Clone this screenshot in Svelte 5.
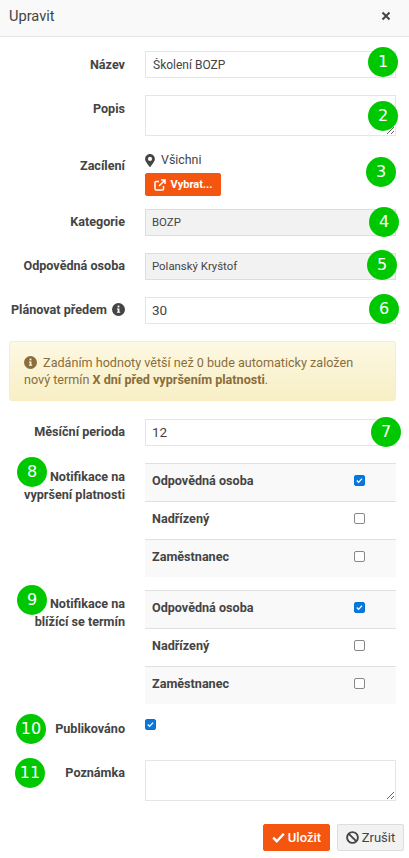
<script>
  // green numbered markers drawn on top of the form
  const markers = [
    { n: 1, x: 383, y: 62 },
    { n: 2, x: 383, y: 116 },
    { n: 3, x: 381, y: 172 },
    { n: 4, x: 384, y: 222 },
    { n: 5, x: 382, y: 265 },
    { n: 6, x: 384, y: 309 },
    { n: 7, x: 386, y: 432 },
    { n: 8, x: 32, y: 472 },
    { n: 9, x: 32, y: 600 },
    { n: 10, x: 31, y: 729 },
    { n: 11, x: 30, y: 773 }
  ];

  const notifications = [
    {
      label: ['Notifikace na', 'vypršení platnosti'],
      rows: [
        { name: 'Odpovědná osoba', checked: true },
        { name: 'Nadřízený', checked: false },
        { name: 'Zaměstnanec', checked: false }
      ]
    },
    {
      label: ['Notifikace na', 'blížící se termín'],
      rows: [
        { name: 'Odpovědná osoba', checked: true },
        { name: 'Nadřízený', checked: false },
        { name: 'Zaměstnanec', checked: false }
      ]
    }
  ];
</script>

<div class="modal">
  <header class="modal-header">
    <h1>Upravit</h1>
    <button class="close" aria-label="Zavřít">
      <svg width="10" height="10" viewBox="0 0 10 10"><path d="M1.5 1.5l7 7M8.5 1.5l-7 7" stroke="#444" stroke-width="2" fill="none" /></svg>
    </button>
  </header>

  <form class="modal-body" on:submit|preventDefault>
    <div class="row first">
      <label class="lbl" for="nazev">Název</label>
      <input id="nazev" class="control" type="text" value="Školení BOZP" />
    </div>

    <div class="row popis">
      <label class="lbl" for="popis">Popis</label>
      <textarea id="popis" class="control"></textarea>
    </div>

    <div class="row zacileni">
      <span class="lbl">Zacílení</span>
      <div class="target">
        <div class="target-value">
          <svg width="10" height="13" viewBox="0 0 384 512"><path fill="#444" d="M172 502C27 291 0 265 0 192 0 86 86 0 192 0s192 86 192 192c0 73-27 99-172 310-9 14-31 14-40 0zm20-230a80 80 0 1 0 0-160 80 80 0 0 0 0 160z" /></svg>
          <span>Všichni</span>
        </div>
        <button type="button" class="btn btn-primary btn-small">
          <svg width="12" height="12" viewBox="0 0 12 12" fill="none" stroke="#fff" stroke-width="1.5"><path d="M9.5 7v3a1 1 0 0 1-1 1H2a1 1 0 0 1-1-1V3.5a1 1 0 0 1 1-1h3" /><path d="M5 7l5.5-5.5M7 1h4v4" /></svg>
          Vybrat...
        </button>
      </div>
    </div>

    <div class="row">
      <label class="lbl" for="kategorie">Kategorie</label>
      <div id="kategorie" class="control select">BOZP</div>
    </div>

    <div class="row">
      <label class="lbl" for="osoba">Odpovědná osoba</label>
      <div id="osoba" class="control select">Polanský Kryštof</div>
    </div>

    <div class="row">
      <label class="lbl" for="predem">
        Plánovat předem
        <svg class="info" width="13" height="13" viewBox="0 0 13 13"><circle cx="6.5" cy="6.5" r="6.5" fill="#444" /><rect x="5.6" y="2.6" width="1.8" height="1.8" fill="#fff" /><path d="M4.9 5.4h2.5v3.4h.8v1H4.9v-1h.8V6.4h-.8z" fill="#fff" /></svg>
      </label>
      <input id="predem" class="control number" type="text" value="30" />
    </div>

    <div class="alert">
      <svg class="info" width="13" height="13" viewBox="0 0 13 13"><circle cx="6.5" cy="6.5" r="6.5" fill="#8a6d3b" /><rect x="5.6" y="2.6" width="1.8" height="1.8" fill="#fcf8e3" /><path d="M4.9 5.4h2.5v3.4h.8v1H4.9v-1h.8V6.4h-.8z" fill="#fcf8e3" /></svg>
      Zadáním hodnoty větší než 0 bude automaticky založen<br />nový termín <b>X dní před vypršením platnosti</b>.
    </div>

    <div class="row">
      <label class="lbl" for="perioda">Měsíční perioda</label>
      <input id="perioda" class="control number" type="text" value="12" />
    </div>

    {#each notifications as group}
      <div class="row notif">
        <span class="lbl">{group.label[0]}<br />{group.label[1]}</span>
        <div class="table">
          {#each group.rows as row}
            <div class="table-row">
              <span>{row.name}</span>
              <input type="checkbox" checked={row.checked} />
            </div>
          {/each}
        </div>
      </div>
    {/each}

    <div class="row published">
      <label class="lbl" for="pub">Publikováno</label>
      <div><input id="pub" type="checkbox" checked /></div>
    </div>

    <div class="row note">
      <label class="lbl" for="pozn">Poznámka</label>
      <textarea id="pozn" class="control"></textarea>
    </div>

    <div class="actions">
      <button type="button" class="btn btn-primary">
        <svg width="13" height="11" viewBox="0 0 13 11" fill="none" stroke="#fff" stroke-width="2.4"><path d="M1.2 5.6l3.6 3.6 7-7.4" /></svg>
        Uložit
      </button>
      <button type="button" class="btn btn-default">
        <svg width="13" height="13" viewBox="0 0 13 13" fill="none" stroke="#444" stroke-width="1.9"><circle cx="6.5" cy="6.5" r="5.4" /><path d="M2.8 2.8l7.4 7.4" /></svg>
        Zrušit
      </button>
    </div>
  </form>

  {#each markers as m}
    <span class="marker" style="left: {m.x - 15}px; top: {m.y - 15}px">{m.n}</span>
  {/each}
</div>

<style>
  :global(body) {
    margin: 0;
    background: #fff;
  }

  .modal {
    position: relative;
    width: 409px;
    height: 858px;
    overflow: hidden;
    background: #fff;
    color: #444;
    font-family: Roboto, "Liberation Sans", sans-serif;
    font-size: 12.6px;
    line-height: 18px;
  }

  .modal-header {
    display: flex;
    justify-content: space-between;
    align-items: center;
    box-sizing: border-box;
    height: 37px;
    padding: 0 9px 4px;
    background: #f9f9f9;
    border-bottom: 1px solid #e5e5e5;
  }

  h1 {
    margin: 0;
    font-size: 14.6px;
    font-weight: 400;
    color: #444;
  }

  .close {
    display: flex;
    padding: 0;
    margin-right: 9px;
    background: none;
    border: none;
  }

  .modal-body {
    display: flex;
    flex-direction: column;
    padding: 14px 13px 0 9px;
  }

  .row {
    display: grid;
    grid-template-columns: 116px 251px;
    column-gap: 20px;
    margin-bottom: 17px;
  }

  .lbl {
    padding-top: 4px;
    text-align: right;
    font-weight: 700;
    color: #444;
    white-space: nowrap;
  }

  .first .lbl {
    padding-top: 5px;
  }

  .control {
    box-sizing: border-box;
    display: block;
    width: 251px;
    height: 27px;
    margin: 0;
    padding: 4px 7px;
    border: 1px solid #e5e5e5;
    border-radius: 0;
    background: #fff;
    color: #444;
    font-family: inherit;
    font-size: 12px;
    line-height: 17px;
    outline: none;
  }

  textarea.control {
    height: 41px;
    resize: both;
  }

  .number {
    font-size: 13.5px;
    padding: 2px 6px 4px;
  }

  .select {
    padding-left: 6px;
    background: #f2f2f2;
    border-color: #ddd;
    font-size: 11.4px;
  }

  .popis {
    margin-bottom: 14px;
  }

  .popis .lbl {
    padding-top: 5px;
  }

  .zacileni {
    margin-bottom: 13px;
  }

  .zacileni .lbl {
    padding-top: 7px;
  }

  .target-value {
    display: flex;
    align-items: center;
    gap: 6px;
    height: 18px;
    margin-top: 1px;
    margin-bottom: 4px;
    font-size: 12.4px;
  }

  .alert {
    box-sizing: border-box;
    width: 387px;
    height: 60px;
    margin-bottom: 18px;
    padding: 12px 14px;
    border: 1px solid #f9eec0;
    border-radius: 3px;
    background: linear-gradient(#fcf8e3, #f8efc6);
    color: #8a6d3b;
    line-height: 17px;
  }

  .alert .info {
    margin: 0 3px 0 0;
  }

  .info {
    vertical-align: -2px;
    margin-left: 2px;
  }

  .notif {
    margin-bottom: 13px;
  }

  .notif .lbl {
    padding-top: 5px;
  }

  .table {
    height: 114px;
    box-sizing: border-box;
    background: #fff;
    border-top: 1px solid #e0e0e0;
  }

  .table-row {
    display: flex;
    justify-content: space-between;
    align-items: flex-start;
    box-sizing: border-box;
    height: 38px;
    padding: 8px 0 0 7px;
    border-bottom: 1px solid #e0e0e0;
    font-weight: 700;
  }

  .table-row:nth-child(odd) {
    background: #f9f9f9;
  }

  .table-row:last-child {
    height: 37px;
    border-bottom: none;
  }

  input[type='checkbox'] {
    appearance: none;
    box-sizing: border-box;
    display: block;
    width: 11px;
    height: 11px;
    margin: 0;
    border: 1px solid #888;
    border-radius: 2px;
    background: #fff;
  }

  .table-row input[type='checkbox'] {
    margin: 3px 31px 0 0;
  }

  input[type='checkbox']:checked {
    border-color: #0075d9;
    background: #0b76db url("data:image/svg+xml,%3Csvg xmlns='http://www.w3.org/2000/svg' viewBox='0 0 11 11'%3E%3Cpath d='M2.2 5.6l2.2 2.2 4.2-4.6' stroke='%23fff' stroke-width='1.6' fill='none'/%3E%3C/svg%3E") center / 100% no-repeat;
  }

  .published {
    margin-bottom: 22px;
  }

  .published .lbl {
    padding-top: 3px;
  }

  .published input[type='checkbox'] {
    margin-top: 2px;
  }

  .note {
    margin-bottom: 23px;
  }

  .actions {
    display: flex;
    justify-content: flex-end;
    gap: 7px;
    margin-right: -8px;
  }

  .btn {
    display: inline-flex;
    align-items: center;
    justify-content: center;
    gap: 3px;
    box-sizing: border-box;
    height: 27px;
    width: 67px;
    padding: 0;
    border-radius: 2px;
    font-family: inherit;
    font-size: 13px;
  }

  .btn-primary {
    border: 1px solid #f4560f;
    background: #f4560f;
    color: #fff;
    font-weight: 500;
  }

  .btn-default {
    border: 1px solid #ddd;
    background: #f2f2f2;
    color: #444;
  }

  .btn-small {
    width: 76px;
    height: 23px;
    gap: 5px;
    font-size: 11px;
    font-weight: 700;
  }

  .marker {
    position: absolute;
    display: flex;
    align-items: center;
    justify-content: center;
    width: 30px;
    height: 30px;
    border-radius: 50%;
    background: #00c800;
    color: #fff;
    font-family: "DejaVu Sans", sans-serif;
    font-size: 16px;
    line-height: 1;
  }
</style>
